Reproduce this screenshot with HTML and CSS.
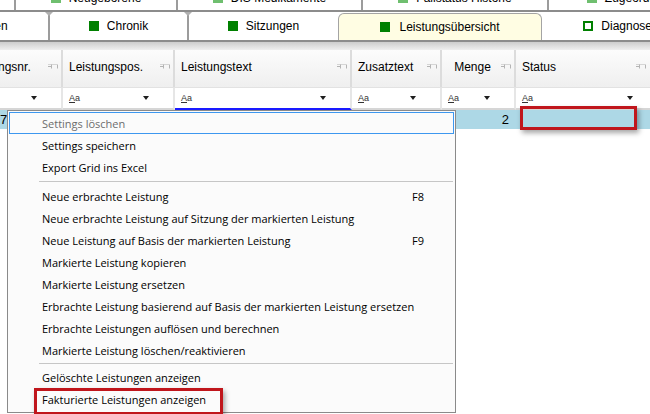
FILE: index.html
```html
<!doctype html>
<html lang="de">

<head>
    <meta charset="utf-8">
    <title>Leistungsübersicht</title>
    <link rel="stylesheet" href="styles.css">
</head>

<body>
    <div class="tabrow tabrow_top">
        <div class="tab tab_first"><span class="quad"></span><span class="tab_text">Rechnungen</span></div>
        <div class="tab tab_w162"><span class="quad"></span><span class="tab_text">Neugeborene</span></div>
        <div class="tab tab_w185"><span class="quad"></span><span class="tab_text">DIS Medikamente</span></div>
        <div class="tab tab_w186"><span class="quad"></span><span class="tab_text">Fallstatus Historie</span></div>
        <div class="tab tab_w193"><span class="quad"></span><span class="tab_text">Zugeordnete Fälle</span></div>
    </div>

    <div class="tabrow tabrow_main">
        <div class="tab tab_first2"><span class="quad"></span><span>Befunden</span></div>
        <div class="tab tab_w139"><span class="quad"></span><span>Chronik</span></div>
        <div class="tab tab_w151"><span class="quad"></span><span>Sitzungen</span></div>
        <div class="tab tab_aktiv"><span class="quad"></span><span>Leistungsübersicht</span></div>
        <div class="tab tab_w158 tab_nach"><span class="quad quad_leer"></span><span>Diagnosen</span></div>
    </div>

    <div class="band"></div>

    <div class="grid">
        <div class="zeile kopf">
            <div class="zelle"><span>Leistungsnr.</span><span class="pin"></span></div>
            <div class="zelle"><span>Leistungspos.</span><span class="pin"></span></div>
            <div class="zelle"><span>Leistungstext</span><span class="pin"></span></div>
            <div class="zelle"><span>Zusatztext</span><span class="pin"></span></div>
            <div class="zelle zelle_mitte"><span class="mitte">Menge</span><span class="pin"></span></div>
            <div class="zelle zelle_ende"><span>Status</span><span class="pin"></span></div>
        </div>

        <div class="zeile filter">
            <div class="zelle"><span class="aa"><u>A</u>a</span><span class="dd"></span></div>
            <div class="zelle"><span class="aa"><u>A</u>a</span><span class="dd"></span></div>
            <div class="zelle zelle_fokus"><span class="aa"><u>A</u>a</span><span class="dd"></span></div>
            <div class="zelle"><span class="aa"><u>A</u>a</span><span class="dd"></span></div>
            <div class="zelle"><span class="aa"><u>A</u>a</span><span class="dd"></span></div>
            <div class="zelle zelle_ende"><span class="aa"><u>A</u>a</span><span class="dd"></span></div>
        </div>

        <div class="zeile daten">
            <div class="zelle zelle_nr">7</div>
            <div class="zelle"></div>
            <div class="zelle"></div>
            <div class="zelle"></div>
            <div class="zelle zelle_zahl">2</div>
            <div class="zelle zelle_status"><span class="markierung markierung_status"></span></div>
        </div>
    </div>

    <div class="menu">
        <div class="item item_aus item_hover">Settings löschen</div>
        <div class="item">Settings speichern</div>
        <div class="item">Export Grid ins Excel</div>
        <div class="trenner"></div>
        <div class="item"><span class="label">Neue erbrachte Leistung</span><span class="taste">F8</span></div>
        <div class="item">Neue erbrachte Leistung auf Sitzung der markierten Leistung</div>
        <div class="item"><span class="label">Neue Leistung auf Basis der markierten Leistung</span><span class="taste">F9</span></div>
        <div class="item">Markierte Leistung kopieren</div>
        <div class="item">Markierte Leistung ersetzen</div>
        <div class="item">Erbrachte Leistung basierend auf Basis der markierten Leistung ersetzen</div>
        <div class="item">Erbrachte Leistungen auflösen und berechnen</div>
        <div class="item">Markierte Leistung löschen/reaktivieren</div>
        <div class="trenner trenner_eng"></div>
        <div class="item">Gelöschte Leistungen anzeigen</div>
        <div class="item item_mark">Fakturierte Leistungen anzeigen<span class="markierung markierung_menu"></span></div>
    </div>
</body>

</html>
```

FILE: styles.css
```css
body {
    margin: 0;
    width: 650px;
    height: 414px;
    overflow: hidden;
    position: relative;
    background-color: #ffffff;
    font-family: "Liberation Sans", Arial, sans-serif;
    font-size: 12px;
    color: #000000;
}

/* Reiter */
.tabrow {
    display: flex;
    white-space: nowrap;
}

.tab {
    flex: none;
    display: flex;
    align-items: center;
    justify-content: center;
    gap: 8px;
    border-left: 2px solid #9c9c9c;
    box-sizing: border-box;
    position: relative;
}

.quad {
    width: 10px;
    height: 10px;
    flex: none;
    background-color: #008000;
}

.quad_leer {
    background-color: #ffffff;
    border: 2px solid #008000;
    box-sizing: border-box;
}

.tabrow_top {
    height: 10px;
    border-bottom: 2px solid #8c8c8c;
    overflow: hidden;
}

.tabrow_top .tab {
    height: 10px;
}

.tabrow_top .quad,
.tabrow_top .tab_text {
    margin-bottom: 15px;
}

.tabrow_top .quad {
    background-color: #6fbf6f;
}

.tab_first {
    width: 114px;
    margin-left: -100px;
    border-left: none;
}

.tab_w162 { width: 162px; }
.tab_w185 { width: 185px; }
.tab_w186 { width: 186px; }
.tab_w193 { width: 193px; }

.tabrow_main {
    height: 28px;
    border-bottom: 2px solid #8c8c8c;
}

.tabrow_main .tab {
    height: 28px;
}

.tabrow_main .tab::before {
    content: "";
    position: absolute;
    left: -5px;
    top: 0;
    border-left: 4px solid transparent;
    border-right: 4px solid transparent;
    border-top: 4px solid #b0b0b0;
}

.tab_first2 {
    width: 150px;
    margin-left: -102px;
    border-left: none !important;
}

.tab_w139 { width: 139px; }
.tab_w151 { width: 151px; }
.tab_w158 { width: 158px; }

.tabrow_main .tab_aktiv {
    width: 204px;
    height: 27px;
    margin-top: 1px;
    gap: 9px;
    background-color: #fffde3;
    border: 1px solid #a4a4a4;
    border-bottom: none;
    border-radius: 6px 6px 0 0;
}

.tabrow_main .tab_aktiv::before,
.tabrow_main .tab_nach::before,
.tabrow_main .tab_first2::before {
    display: none;
}

.tab_nach {
    border-left: none !important;
}

.band {
    height: 8px;
    background: linear-gradient(#cdcdcd, #efefef);
}

/* Grid */
.grid {
    margin-left: -40px;
}

.zeile {
    display: grid;
    grid-template-columns: 103px 112px 177px 90px 74px 144px;
}

.zelle {
    display: flex;
    align-items: center;
    justify-content: space-between;
    box-sizing: border-box;
    overflow: hidden;
    white-space: nowrap;
}

.kopf {
    height: 38px;
    background: linear-gradient(#fcfcfc, #efefef);
    border-bottom: 1px solid #e2e2e2;
    box-sizing: border-box;
}

.kopf .zelle {
    padding: 0 3px 4px 6px;
    border-right: 2px solid #dcdcdc;
}

.zelle_mitte .mitte {
    flex: 1;
    text-align: center;
}

.kopf .zelle_ende {
    padding-right: 12px;
}

.pin {
    width: 10px;
    height: 6px;
    flex: none;
    margin-left: 4px;
    background:
        linear-gradient(#b4b4b4, #b4b4b4) 0 2.5px / 3px 1px no-repeat,
        linear-gradient(#b4b4b4, #b4b4b4) 3px 0 / 1px 6px no-repeat;
    border: 1px solid #b4b4b4;
    border-left: none;
    background-origin: border-box;
    box-sizing: border-box;
    padding-left: 4px;
    border-top-width: 0;
    border-bottom-width: 0;
    box-shadow: inset 0 1px 0 #b4b4b4, inset 0 -1px 0 #b4b4b4;
    clip-path: inset(1px 0 1px 0);
}

.filter {
    height: 22px;
    background-color: #ffffff;
}

.filter .zelle {
    padding: 0 24px 0 6px;
    border-right: 2px solid #e6e6e6;
    border-bottom: 2px solid #d6d6d6;
}

.filter .zelle_fokus {
    border-bottom-color: #1a1aff;
}

.filter .zelle_ende {
    padding-right: 25px;
}

.aa {
    font-size: 9px;
    color: #333333;
}

.dd {
    width: 0;
    height: 0;
    border-left: 3.5px solid transparent;
    border-right: 3.5px solid transparent;
    border-top: 4px solid #1e1e1e;
}

.daten {
    height: 19px;
    background-color: #add8e6;
    font-size: 13px;
}

.zelle_nr {
    padding-left: 40px;
    justify-content: flex-start;
}

.zelle_zahl {
    justify-content: flex-end;
    padding-right: 7px;
}

.zelle_status {
    overflow: visible;
    position: relative;
}

.markierung {
    position: absolute;
    box-sizing: border-box;
    border: 3px solid #c0161c;
    box-shadow: 2px 3px 5px rgba(0, 0, 0, 0.35);
}

.markierung_status {
    left: 4px;
    top: -4px;
    width: 117px;
    height: 24px;
}

/* Kontextmenue */
.menu {
    position: absolute;
    left: 7px;
    top: 110px;
    width: 449px;
    height: 303px;
    box-sizing: border-box;
    padding: 1px;
    border: 1px solid #8a8a8a;
    background-color: #fbfbfb;
    font-family: "Open Sans", "Noto Sans", sans-serif;
    font-size: 11px;
    color: #000000;
}

.item {
    height: 22px;
    display: flex;
    align-items: center;
    justify-content: space-between;
    padding: 0 30px 0 33px;
    box-sizing: border-box;
    white-space: nowrap;
    position: relative;
}

.item_aus {
    color: #6d6d6d;
}

.item_hover {
    border: 1px solid #3d97ef;
    padding-left: 32px;
}

.trenner {
    height: 1px;
    margin: 3px 1px 3px 30px;
    background-color: #c6c6c6;
}

.trenner_eng {
    margin-top: 2px;
    margin-bottom: 2px;
}

.markierung_menu {
    left: 25px;
    top: 0;
    width: 189px;
    height: 27px;
}
```
